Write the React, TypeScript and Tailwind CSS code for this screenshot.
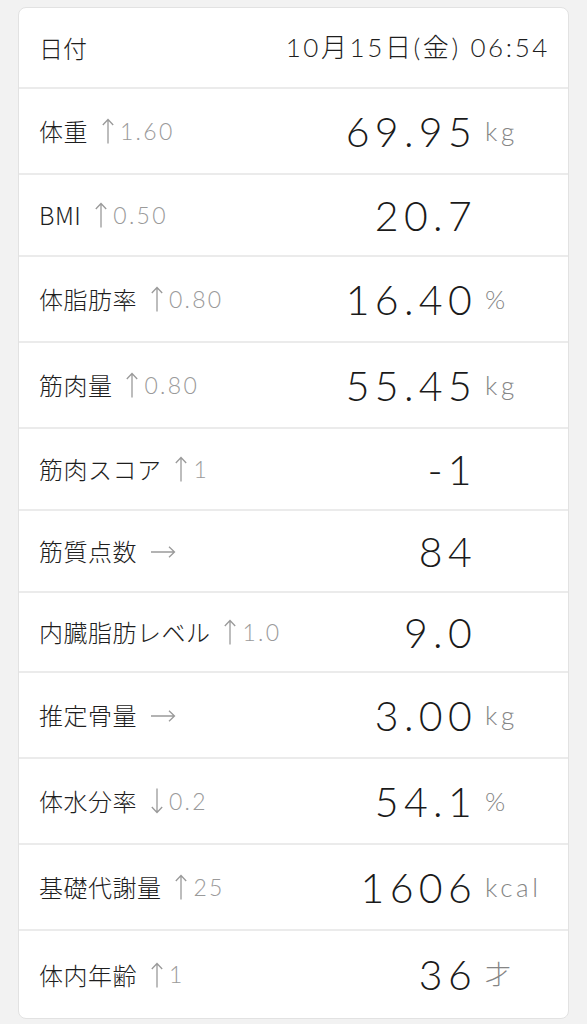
const jp = { fontFamily: '"Noto Sans CJK JP", "Noto Sans", sans-serif' };

type Dir = 'up' | 'down' | 'right';

type Row = {
  label: string;
  arrow: Dir;
  delta?: string;
  value: string;
  unit?: string;
  h: string;
};

const rows: Row[] = [
  { label: '体重', arrow: 'up', delta: '1.60', value: '69.95', unit: 'kg', h: 'h-[86px]' },
  { label: 'BMI', arrow: 'up', delta: '0.50', value: '20.7', h: 'h-[82px]' },
  { label: '体脂肪率', arrow: 'up', delta: '0.80', value: '16.40', unit: '%', h: 'h-[86px]' },
  { label: '筋肉量', arrow: 'up', delta: '0.80', value: '55.45', unit: 'kg', h: 'h-[86px]' },
  { label: '筋肉スコア', arrow: 'up', delta: '1', value: '-1', h: 'h-[82px]' },
  { label: '筋質点数', arrow: 'right', value: '84', h: 'h-[82px]' },
  { label: '内臓脂肪レベル', arrow: 'up', delta: '1.0', value: '9.0', h: 'h-[80px]' },
  { label: '推定骨量', arrow: 'right', value: '3.00', unit: 'kg', h: 'h-[86px]' },
  { label: '体水分率', arrow: 'down', delta: '0.2', value: '54.1', unit: '%', h: 'h-[86px]' },
  { label: '基礎代謝量', arrow: 'up', delta: '25', value: '1606', unit: 'kcal', h: 'h-[86px]' },
  { label: '体内年齢', arrow: 'up', delta: '1', value: '36', unit: '才', h: 'h-[87px]' },
];

function Arrow({ dir }: { dir: Dir }) {
  if (dir === 'right') {
    return (
      <svg width="25" height="12" viewBox="0 0 25 12" fill="none" stroke="#9a9a9a" strokeWidth="1.3" className="ml-[14px] mt-[2px]">
        <path d="M0 6H23.5M18 0.8L23.5 6L18 11.2" />
      </svg>
    );
  }
  return (
    <svg
      width="12"
      height="26"
      viewBox="0 0 12 26"
      fill="none"
      stroke="#9a9a9a"
      strokeWidth="1.3"
      className={`ml-[14px] ${dir === 'down' ? 'rotate-180' : ''}`}
    >
      <path d="M6 1.5V25.5M0.8 7L6 1.5L11.2 7" />
    </svg>
  );
}

function MetricRow({ row, last }: { row: Row; last: boolean }) {
  return (
    <div
      className={`flex items-center pl-[20px] pr-[20px] ${row.h} ${
        last ? '' : 'border-b-2 border-[#ebebeb]'
      }`}
    >
      <div className="flex flex-1 items-center whitespace-nowrap">
        <span className="text-[24px] font-light tracking-[0.02em] text-[#1e1e1e]" style={jp}>
          {row.label}
        </span>
        <Arrow dir={row.arrow} />
        {row.delta && (
          <span className="ml-[6px] font-['Lato',sans-serif] text-[23px] font-light tracking-[0.1em] text-[#9a9a9a]">
            {row.delta}
          </span>
        )}
      </div>
      <span className="font-['Lato',sans-serif] text-[41px] font-light leading-none tracking-[0.13em] text-[#1a1a1a]">
        {row.value}
      </span>
      <span className="w-[71px] pl-[8px] font-['Lato','Noto_Sans_CJK_JP',sans-serif] text-[26px] font-light tracking-[0.14em] text-[#858585]">
        {row.unit ?? ''}
      </span>
    </div>
  );
}

export default function App() {
  return (
    <div className="min-h-screen bg-[#f2f2f2] px-[18px] pt-[7px]">
      <div className="overflow-hidden rounded-[8px] border border-[#e2e2e2] bg-white">
        <div className="flex h-[81px] items-center justify-between border-b-2 border-[#ebebeb] px-[20px]">
          <span className="text-[24px] font-light text-[#1e1e1e]" style={jp}>
            日付
          </span>
          <span
            className="mr-[-2px] text-[26px] font-light tracking-[0.1em] text-[#1e1e1e]"
            style={{ fontFamily: '"Lato", "Noto Sans CJK JP", sans-serif' }}
          >
            10月15日(金) 06:54
          </span>
        </div>
        {rows.map((row, i) => (
          <MetricRow key={row.label} row={row} last={i === rows.length - 1} />
        ))}
      </div>
    </div>
  );
}
